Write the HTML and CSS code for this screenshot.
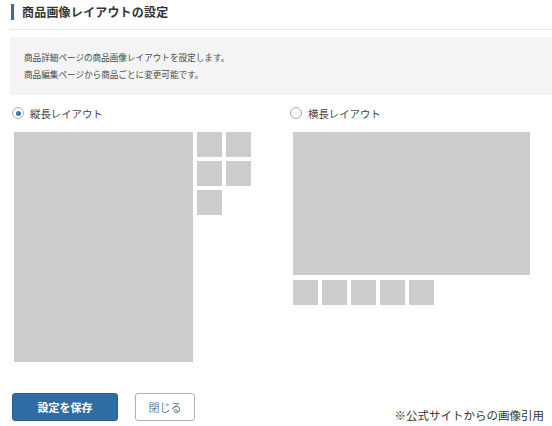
FILE: index.html
```html
<!DOCTYPE html>
<html lang="ja">
<head>
    <meta charset="UTF-8">
    <meta name="viewport" content="width=device-width, initial-scale=1.0">
    <title>商品画像レイアウトの設定</title>
    <link rel="stylesheet" href="styles.css">
</head>
<body>

<div class="panel">
    <h2 class="panel-title">商品画像レイアウトの設定</h2>
    <div class="divider"></div>

    <div class="info">
        <p>商品詳細ページの商品画像レイアウトを設定します。</p>
        <p>商品編集ページから商品ごとに変更可能です。</p>
    </div>

    <div class="layouts">
        <div class="layout layout-vertical">
            <label class="radio">
                <span class="radio-mark checked"></span>
                縦長レイアウト
            </label>
            <div class="preview">
                <div class="main-image"></div>
                <div class="thumbs">
                    <div class="thumb"></div>
                    <div class="thumb"></div>
                    <div class="thumb"></div>
                    <div class="thumb"></div>
                    <div class="thumb"></div>
                </div>
            </div>
        </div>

        <div class="layout layout-horizontal">
            <label class="radio">
                <span class="radio-mark"></span>
                横長レイアウト
            </label>
            <div class="preview">
                <div class="main-image"></div>
                <div class="thumbs">
                    <div class="thumb"></div>
                    <div class="thumb"></div>
                    <div class="thumb"></div>
                    <div class="thumb"></div>
                    <div class="thumb"></div>
                </div>
            </div>
        </div>
    </div>

    <div class="footer">
        <button class="btn btn-primary">設定を保存</button>
        <button class="btn btn-default">閉じる</button>
        <span class="note">※公式サイトからの画像引用</span>
    </div>
</div>

</body>
</html>
```

FILE: styles.css
```css
body {
    margin: 0;
    background: #fff;
    color: #333;
    font-family: "Noto Sans CJK JP", "Noto Sans", sans-serif;
}

.panel {
    width: 552px;
    height: 426px;
    overflow: hidden;
}

.panel-title {
    margin: 4px 0 0 11px;
    padding-left: 8px;
    border-left: 3px solid #3b6c9c;
    height: 16px;
    line-height: 16px;
    font-size: 12px;
    letter-spacing: 0.2px;
    font-weight: bold;
    color: #333;
}

.divider {
    margin: 9px 0 0 10px;
    border-top: 1px solid #e4e4e4;
}

.info {
    margin: 7px 0 0 10px;
    height: 58px;
    box-sizing: border-box;
    padding: 12px 0 0 14px;
    background: #f4f4f4;
}

.info p {
    margin: 0;
    font-size: 8.6px;
    line-height: 17px;
    color: #4a4a4a;
}

.layouts {
    display: flex;
    margin-top: 11px;
}

.layout {
    display: flex;
    flex-direction: column;
}

.layout-vertical {
    width: 278px;
    padding-left: 12px;
}

.radio {
    display: flex;
    align-items: center;
    height: 14px;
    font-size: 10.4px;
    color: #444;
    gap: 6px;
}

.radio-mark {
    width: 12px;
    height: 12px;
    border: 1px solid #aaa;
    border-radius: 50%;
    box-sizing: border-box;
    background: #fff;
    position: relative;
}

.radio-mark.checked {
    border-color: #9bb6d3;
}

.radio-mark.checked::after {
    content: "";
    position: absolute;
    left: 2.5px;
    top: 2.5px;
    width: 5px;
    height: 5px;
    border-radius: 50%;
    background: #3a76b5;
}

.preview {
    display: flex;
    margin-top: 12px;
}

.main-image,
.thumb {
    background: #ccc;
}

.layout-vertical .preview {
    margin-left: 2px;
    gap: 4px;
}

.layout-vertical .main-image {
    width: 179px;
    height: 230px;
}

.layout-vertical .thumbs {
    display: grid;
    grid-template-columns: 25px 25px;
    grid-auto-rows: 25px;
    gap: 4px;
    align-content: start;
}

.layout-horizontal .preview {
    flex-direction: column;
    margin-left: 3px;
    gap: 5px;
}

.layout-horizontal .main-image {
    width: 237px;
    height: 143px;
}

.layout-horizontal .thumbs {
    display: flex;
    gap: 4px;
}

.thumb {
    width: 25px;
    height: 25px;
}

.footer {
    display: flex;
    align-items: center;
    margin: 29px 0 0 12px;
}

.btn {
    height: 28px;
    border-radius: 3px;
    font-family: "Noto Sans CJK JP", sans-serif;
    font-size: 11px;
    cursor: pointer;
    padding: 0;
}

.btn-primary {
    width: 106px;
    background: #2e6da3;
    border: 1px solid #285f8f;
    color: #fff;
    font-weight: bold;
}

.btn-default {
    width: 60px;
    margin-left: 17px;
    background: #fff;
    border: 1px solid #a9b3bd;
    color: #5d7d9a;
}

.note {
    margin-left: auto;
    margin-right: 8px;
    margin-top: 16px;
    font-size: 11.5px;
    color: #333;
}
```
